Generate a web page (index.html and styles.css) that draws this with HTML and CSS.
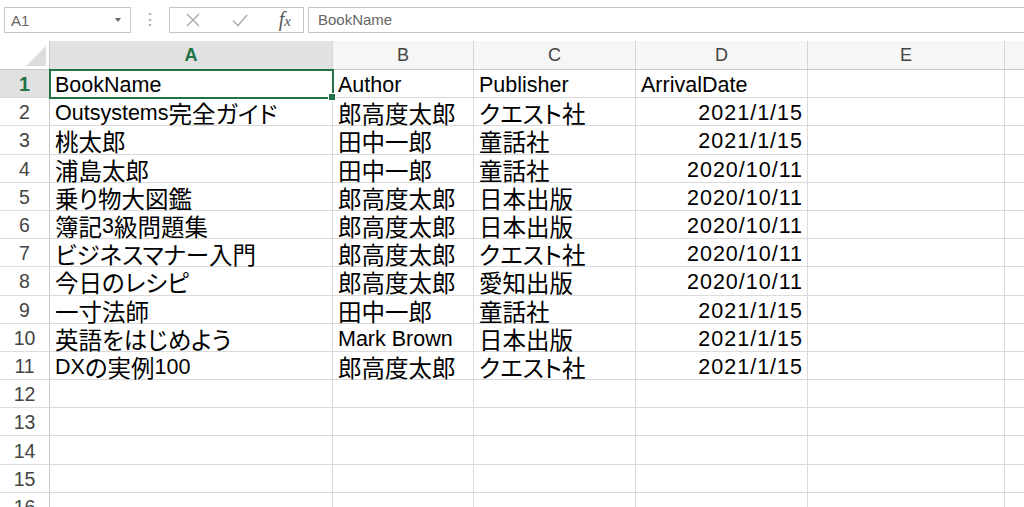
FILE: index.html
```html
<!DOCTYPE html>
<html lang="ja">
<head>
<meta charset="utf-8">
<title>Excel</title>
<link rel="stylesheet" href="styles.css">
</head>
<body>
<div class="toolbar">
  <div class="namebox"><span class="nb-text">A1</span><span class="nb-arrow"></span></div>
  <div class="dots">⋮</div>
  <div class="fbtns">
    <svg class="ico" width="18" height="18" viewBox="0 0 18 18"><path d="M3 3 L15 15 M15 3 L3 15" stroke="#a8a8a8" stroke-width="1.4" fill="none"/></svg>
    <svg class="ico" width="18" height="18" viewBox="0 0 18 18"><path d="M2 9.5 L7 14.5 L16 4" stroke="#b0b0b0" stroke-width="1.6" fill="none"/></svg>
    <span class="fx">f<span class="fxx">x</span></span>
  </div>
  <div class="formula">BookName</div>
</div>
<div class="sheet">
  <div class="corner"><span class="tri"></span></div>
  <div class="ch sel-h">A</div>
  <div class="ch">B</div>
  <div class="ch">C</div>
  <div class="ch">D</div>
  <div class="ch">E</div>
  <div class="ch"></div>

  <div class="rh sel-h">1</div>
  <div class="c sel">BookName<span class="handle"></span></div>
  <div class="c">Author</div>
  <div class="c">Publisher</div>
  <div class="c">ArrivalDate</div>
  <div class="c"></div><div class="c"></div>

  <div class="rh">2</div>
  <div class="c">Outsystems<span class="j">完全ガイド</span></div>
  <div class="c"><span class="j">郎高度太郎</span></div>
  <div class="c"><span class="j">クエスト社</span></div>
  <div class="c d">2021/1/15</div>
  <div class="c"></div><div class="c"></div>

  <div class="rh">3</div>
  <div class="c"><span class="j">桃太郎</span></div>
  <div class="c"><span class="j">田中一郎</span></div>
  <div class="c"><span class="j">童話社</span></div>
  <div class="c d">2021/1/15</div>
  <div class="c"></div><div class="c"></div>

  <div class="rh">4</div>
  <div class="c"><span class="j">浦島太郎</span></div>
  <div class="c"><span class="j">田中一郎</span></div>
  <div class="c"><span class="j">童話社</span></div>
  <div class="c d">2020/10/11</div>
  <div class="c"></div><div class="c"></div>

  <div class="rh">5</div>
  <div class="c"><span class="j">乗り物大図鑑</span></div>
  <div class="c"><span class="j">郎高度太郎</span></div>
  <div class="c"><span class="j">日本出版</span></div>
  <div class="c d">2020/10/11</div>
  <div class="c"></div><div class="c"></div>

  <div class="rh">6</div>
  <div class="c"><span class="j">簿記</span>3<span class="j">級問題集</span></div>
  <div class="c"><span class="j">郎高度太郎</span></div>
  <div class="c"><span class="j">日本出版</span></div>
  <div class="c d">2020/10/11</div>
  <div class="c"></div><div class="c"></div>

  <div class="rh">7</div>
  <div class="c"><span class="j">ビジネスマナー入門</span></div>
  <div class="c"><span class="j">郎高度太郎</span></div>
  <div class="c"><span class="j">クエスト社</span></div>
  <div class="c d">2020/10/11</div>
  <div class="c"></div><div class="c"></div>

  <div class="rh">8</div>
  <div class="c"><span class="j">今日のレシピ</span></div>
  <div class="c"><span class="j">郎高度太郎</span></div>
  <div class="c"><span class="j">愛知出版</span></div>
  <div class="c d">2020/10/11</div>
  <div class="c"></div><div class="c"></div>

  <div class="rh">9</div>
  <div class="c"><span class="j">一寸法師</span></div>
  <div class="c"><span class="j">田中一郎</span></div>
  <div class="c"><span class="j">童話社</span></div>
  <div class="c d">2021/1/15</div>
  <div class="c"></div><div class="c"></div>

  <div class="rh">10</div>
  <div class="c"><span class="j">英語をはじめよう</span></div>
  <div class="c">Mark Brown</div>
  <div class="c"><span class="j">日本出版</span></div>
  <div class="c d">2021/1/15</div>
  <div class="c"></div><div class="c"></div>

  <div class="rh">11</div>
  <div class="c">DX<span class="j">の実例</span>100</div>
  <div class="c"><span class="j">郎高度太郎</span></div>
  <div class="c"><span class="j">クエスト社</span></div>
  <div class="c d">2021/1/15</div>
  <div class="c"></div><div class="c"></div>

  <div class="rh">12</div>
  <div class="c"></div><div class="c"></div><div class="c"></div><div class="c"></div><div class="c"></div><div class="c"></div>
  <div class="rh">13</div>
  <div class="c"></div><div class="c"></div><div class="c"></div><div class="c"></div><div class="c"></div><div class="c"></div>
  <div class="rh">14</div>
  <div class="c"></div><div class="c"></div><div class="c"></div><div class="c"></div><div class="c"></div><div class="c"></div>
  <div class="rh">15</div>
  <div class="c"></div><div class="c"></div><div class="c"></div><div class="c"></div><div class="c"></div><div class="c"></div>
  <div class="rh">16</div>
  <div class="c"></div><div class="c"></div><div class="c"></div><div class="c"></div><div class="c"></div><div class="c"></div>
</div>
</body>
</html>
```
FILE: styles.css
```css
html, body {
  margin: 0;
  padding: 0;
  background: #ffffff;
  overflow: hidden;
  height: 507px;
}
body {
  font-family: "Liberation Sans", "Noto Sans CJK JP", sans-serif;
  color: #000;
}
.toolbar {
  height: 41px;
  display: flex;
  align-items: flex-start;
  padding-top: 7px;
  box-sizing: border-box;
}
.namebox {
  margin-left: 4px;
  width: 127px;
  height: 26px;
  border: 1px solid #c6c6c6;
  box-sizing: border-box;
  display: flex;
  align-items: center;
  justify-content: space-between;
  padding: 0 9px 0 6px;
  font-size: 15px;
  color: #666;
}
.nb-arrow {
  width: 0;
  height: 0;
  border-left: 3.5px solid transparent;
  border-right: 3.5px solid transparent;
  border-top: 4px solid #666;
}
.dots {
  width: 38px;
  text-align: center;
  color: #a0a0a0;
  font-size: 16px;
  line-height: 26px;
}
.fbtns {
  width: 135px;
  height: 26px;
  border: 1px solid #c6c6c6;
  box-sizing: border-box;
  display: flex;
  align-items: center;
  padding: 0 12px 0 14px;
  justify-content: space-between;
}
.fx {
  font-family: "Liberation Serif", serif;
  font-style: italic;
  font-size: 20px;
  color: #555;
  line-height: 20px;
}
.fxx { font-size: 15px; }
.formula {
  margin-left: 4px;
  flex: 1;
  height: 26px;
  border: 1px solid #c6c6c6;
  border-right: none;
  box-sizing: border-box;
  font-size: 15px;
  color: #666;
  line-height: 24px;
  padding-left: 9px;
}

.sheet {
  display: grid;
  grid-template-columns: 50px 283px 141px 162px 172px 197px 40px;
  grid-template-rows: 29px repeat(16, 28.2px);
}
.corner {
  background: #ffffff;
  border-right: 1px solid #c9c9c9;
  border-bottom: 1px solid #c9c9c9;
  box-sizing: border-box;
  position: relative;
}
.tri {
  position: absolute;
  right: 3px;
  bottom: 3px;
  width: 0;
  height: 0;
  border-left: 20px solid transparent;
  border-bottom: 20px solid #dcdcdc;
}
.ch {
  background: #f6f6f6;
  border-right: 1px solid #d4d4d4;
  border-bottom: 1px solid #c9c9c9;
  box-sizing: border-box;
  font-size: 18px;
  color: #444;
  display: flex;
  align-items: center;
  justify-content: center;
  padding-top: 1px;
}
.rh {
  background: #ffffff;
  border-right: 1px solid #c9c9c9;
  border-bottom: 1px solid #dcdcdc;
  box-sizing: border-box;
  font-size: 19.5px;
  color: #444;
  display: flex;
  align-items: center;
  justify-content: center;
  padding-top: 2px;
}
.ch.sel-h, .rh.sel-h {
  background: #e1e1e1;
  color: #217346;
  font-weight: bold;
}
.c {
  border-right: 1px solid #dadada;
  border-bottom: 1px solid #dadada;
  box-sizing: border-box;
  font-size: 21.5px;
  line-height: 24px;
  padding: 3px 5px 0 5px;
  white-space: nowrap;
  display: flex;
  align-items: center;
}
.j {
  font-family: "Noto Sans CJK JP", sans-serif;
  font-size: 23.5px;
  line-height: 24px;
  font-feature-settings: "palt" 1;
}
.c.d {
  justify-content: flex-end;
  letter-spacing: 1px;
  padding-right: 4px;
}
.c.sel {
  position: relative;
  z-index: 1;
  outline: 2px solid #217346;
  outline-offset: -1px;
}
.handle {
  position: absolute;
  right: -4px;
  bottom: -4px;
  width: 6px;
  height: 6px;
  background: #217346;
  border: 1px solid #fff;
}
```
